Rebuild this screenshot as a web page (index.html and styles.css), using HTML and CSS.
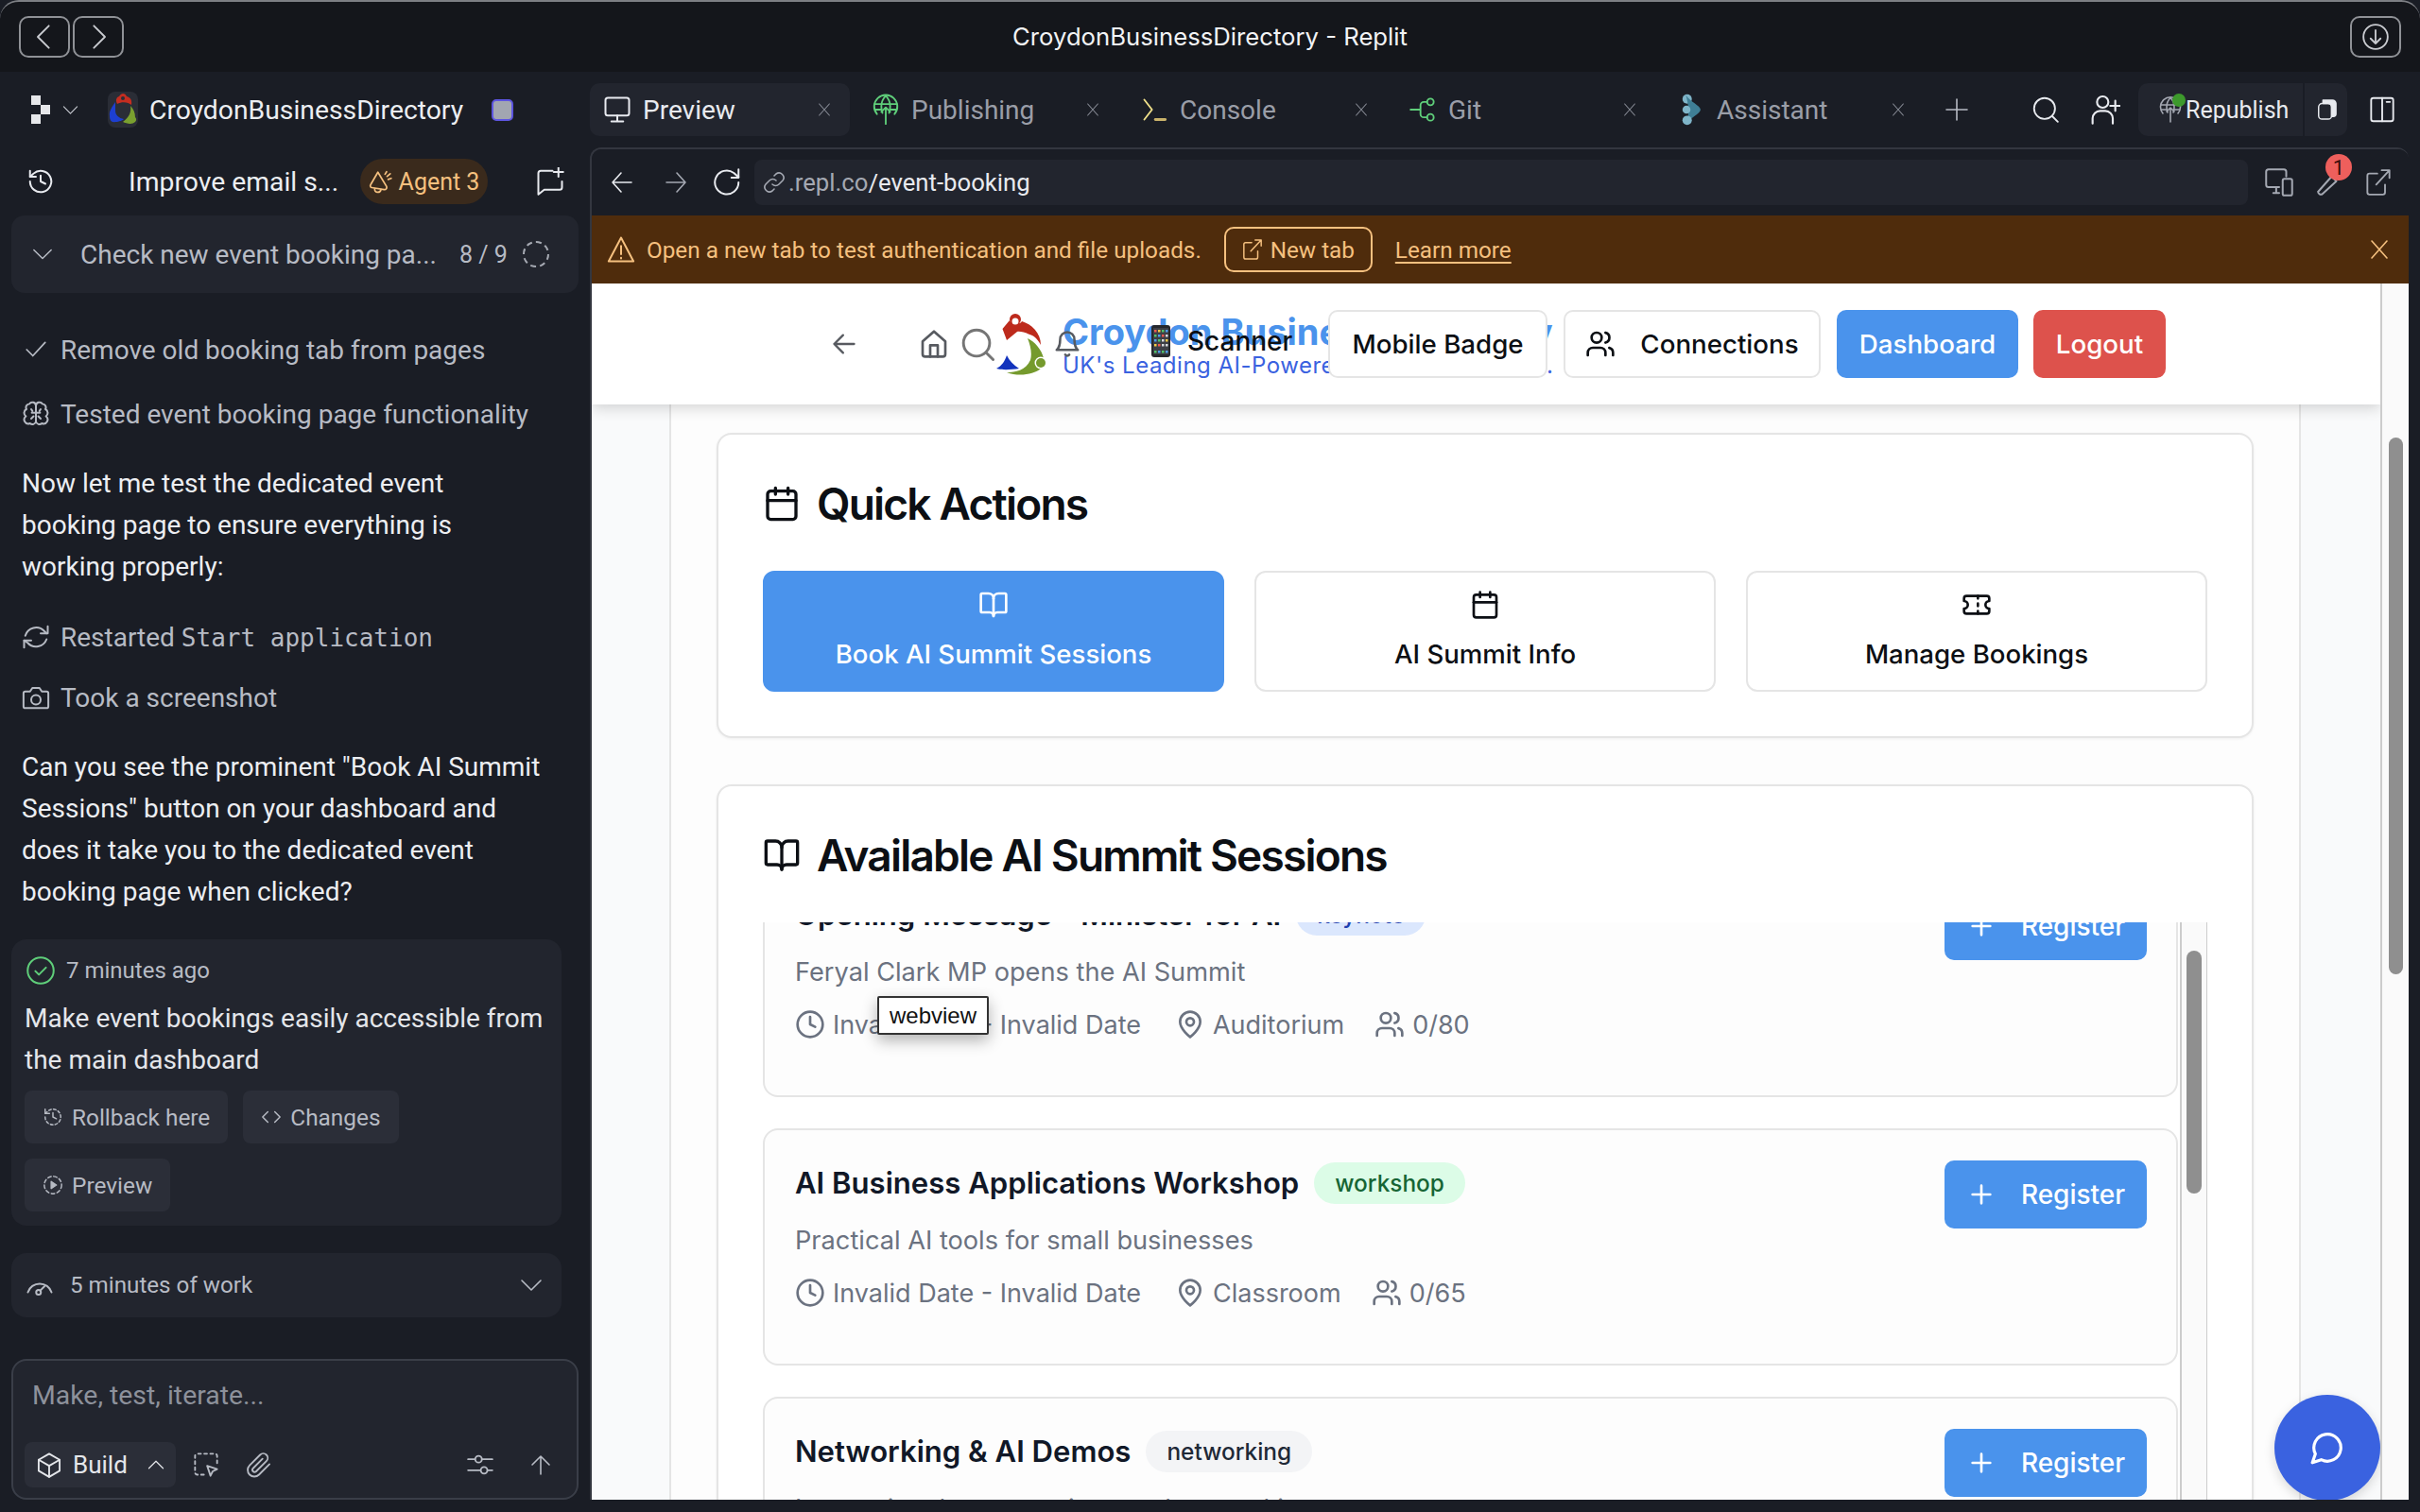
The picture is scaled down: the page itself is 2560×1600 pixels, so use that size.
FILE: index.html
```html
<!DOCTYPE html>
<html lang="en">
<head>
<meta charset="utf-8">
<title>CroydonBusinessDirectory - Replit</title>
<link rel="stylesheet" href="styles.css">
</head>
<body>
<svg class="sprite" xmlns="http://www.w3.org/2000/svg">
  <symbol id="chev-d" viewBox="0 0 24 24"><path d="M2 7l10 10 10-10"/></symbol>
  <symbol id="chev-u" viewBox="0 0 24 24"><path d="M2 17 12 7l10 10"/></symbol>
  <symbol id="history" viewBox="0 0 24 24"><path d="M3 12a9 9 0 1 0 3-6.7L3 8"/><path d="M3 3v5h5"/><path d="M12 7v5l4 2"/></symbol>
  <symbol id="check" viewBox="0 0 24 24"><path d="M21 5 9 18l-6-6"/></symbol>
  <symbol id="brain" viewBox="0 0 24 24"><path d="M12 5a3 3 0 0 0-5.500-1.500A3 3 0 0 0 4 8a3.500 3.500 0 0 0-.5 6A3.500 3.500 0 0 0 7 20a3 3 0 0 0 5-1.500z"/><path d="M12 5a3 3 0 0 1 5.500-1.500A3 3 0 0 1 20 8a3.500 3.500 0 0 1 .5 6 3.500 3.500 0 0 1-3.500 6 3 3 0 0 1-5-1.500z"/><path d="M12 11H8.500M12 11h3.500M8 8l1 1.500M16 8l-1 1.500M8 16l2-2M16 16l-2-2"/></symbol>
  <symbol id="refresh" viewBox="0 0 24 24"><path d="M3 11a9.500 9.500 0 0 1 16-4l2 2"/><path d="M22 3v6h-6"/><path d="M21 14a9.500 9.500 0 0 1-16 3l-3-2"/><path d="M2 21v-6h6"/></symbol>
  <symbol id="camera" viewBox="0 0 24 24"><path d="M15 4H9L7 7H3a1.500 1.500 0 0 0-1.500 1.500v11A1.500 1.500 0 0 0 3 21h18a1.500 1.500 0 0 0 1.500-1.500v-11A1.500 1.500 0 0 0 21 7h-4z"/><circle cx="12" cy="14" r="4"/></symbol>
  <symbol id="check-circle" viewBox="0 0 24 24"><circle cx="12" cy="12" r="11"/><path d="M7.500 12.500l3 3 6-6"/></symbol>
  <symbol id="rollback" viewBox="0 0 24 24"><path stroke-dasharray="3 2.500" d="M3 12a9 9 0 1 0 3-6.700L3 8"/><path d="M3 3v5h5"/><path d="M12 7v5l4 2"/></symbol>
  <symbol id="code" viewBox="0 0 24 24"><path d="M8 6l-6 6 6 6"/><path d="M16 6l6 6-6 6"/></symbol>
  <symbol id="play-dash" viewBox="0 0 24 24"><circle cx="12" cy="12" r="10" stroke-dasharray="4 2.800"/><path class="solid" d="M10 8l6 4-6 4z"/></symbol>
  <symbol id="gauge" viewBox="0 0 24 24"><path d="M2 18a10.500 10.500 0 0 1 20 0"/><circle cx="11" cy="18" r="2"/><path d="M12.500 16.500l3.500-3.500"/></symbol>
  <symbol id="cube" viewBox="0 0 24 24"><path d="M12 2l9.500 5.500v10L12 23l-9.500-5.500v-10z"/><path d="M2.500 7.500 12 13l9.500-5.500"/><path d="M12 13v10"/></symbol>
  <symbol id="select" viewBox="0 0 24 24"><path stroke-dasharray="2.500 3" d="M10 21H4a2 2 0 0 1-2-2V4a2 2 0 0 1 2-2h16a2 2 0 0 1 2 2v7"/><path d="M13 13l9 3-4 2-2 4z"/></symbol>
  <symbol id="clip" viewBox="0 0 24 24"><path d="M21.500 11.500 12 21a6 6 0 0 1-8.500-8.500l9.500-9.500a4 4 0 0 1 5.700 5.700l-9.500 9.500a2 2 0 0 1-2.800-2.800l8.800-8.800"/></symbol>
  <symbol id="sliders" viewBox="0 0 24 24"><path d="M1 7h6M14 7h9M1 17h11M19 17h4"/><circle cx="10.500" cy="7" r="3"/><circle cx="15.500" cy="17" r="3"/></symbol>
  <symbol id="up" viewBox="0 0 24 24"><path d="M12 22V3M3 12l9-9 9 9"/></symbol>
  <symbol id="down-circle" viewBox="0 0 24 24"><circle cx="12" cy="12" r="11"/><path d="M12 6v12M7.500 13.500 12 18l4.500-4.500"/></symbol>
  <symbol id="left" viewBox="0 0 24 24"><path d="M16 2 6 12l10 10"/></symbol>
  <symbol id="right" viewBox="0 0 24 24"><path d="M8 2l10 10L8 22"/></symbol>
  <symbol id="monitor" viewBox="0 0 24 24"><rect x="2" y="2" width="20" height="15" rx="2"/><path d="M12 17v5M7 22h10"/></symbol>
  <symbol id="globe-up" viewBox="0 0 24 28"><path d="M4 18a10.500 10.500 0 1 1 16 0"/><path d="M12 1.500c-3 3-4 6-4 9.500s.5 4 1 6M12 1.500c3 3 4 6 4 9.500s-.5 4-1 6M2 9h20M2.500 14h6M15.500 14h6"/><path d="M12 27V12M8 16l4-4 4 4"/></symbol>
  <symbol id="prompt" viewBox="0 0 24 24"><path class="stroke-yellow" d="M3 3l7 9-7 9"/><path class="stroke-sand" d="M13 21h9"/></symbol>
  <symbol id="git" viewBox="0 0 24 24"><circle cx="19" cy="5" r="3"/><circle cx="19" cy="19" r="3"/><path d="M16 5h-3a3 3 0 0 0-3 3v8a3 3 0 0 0 3 3h3M1 12h9"/></symbol>
  <symbol id="close" viewBox="0 0 24 24"><path d="M4 3l16 18M20 3 4 21"/></symbol>
  <symbol id="plus" viewBox="0 0 24 24"><path d="M12 1v22M1 12h22"/></symbol>
  <symbol id="search" viewBox="0 0 24 24"><circle cx="11" cy="11" r="9.500"/><path d="M18 18l5 5"/></symbol>
  <symbol id="user-plus" viewBox="0 0 24 24"><circle cx="10" cy="6" r="4.500"/><path d="M2 23v-4a6 6 0 0 1 6-6h4a6 6 0 0 1 6 6v4"/><path d="M20 5v8M16 9h8"/></symbol>
  <symbol id="stack" viewBox="0 0 24 24"><rect x="3" y="5" width="15" height="18" rx="4"/><path class="solid" d="M8 1h11a4 4 0 0 1 4 4v12a3 3 0 0 1-3 3h-2V9a4 4 0 0 0-4-4H8z"/></symbol>
  <symbol id="panel" viewBox="0 0 24 24"><rect x="2" y="1.500" width="20" height="21" rx="2"/><path d="M12 1.500v21M16 5h3"/></symbol>
  <symbol id="arrow-l" viewBox="0 0 24 24"><path d="M22 12H2M11 2 2 12l9 10"/></symbol>
  <symbol id="arrow-r" viewBox="0 0 24 24"><path d="M2 12h20M13 2l9 10-9 10"/></symbol>
  <symbol id="reload" viewBox="0 0 24 24"><path d="M21 12a10 10 0 1 1-4-8l4 3.500"/><path d="M21 1v7h-6"/></symbol>
  <symbol id="link" viewBox="0 0 24 24"><path d="M10 14a5 5 0 0 0 7 0l4-4a5 5 0 0 0-7-7l-2 2"/><path d="M14 10a5 5 0 0 0-7 0l-4 4a5 5 0 0 0 7 7l2-2"/></symbol>
  <symbol id="devices" viewBox="0 0 24 24"><path d="M12 16H3a2 2 0 0 1-2-2V3a2 2 0 0 1 2-2h13a2 2 0 0 1 2 2v4"/><path d="M7 21h5M9.500 16v5"/><rect x="15" y="9" width="8" height="14" rx="1.500"/></symbol>
  <symbol id="wrench" viewBox="0 0 24 24"><path d="M2.500 20 14 7l4 4L6 22a2.500 2.500 0 0 1-3.500-2z"/></symbol>
  <symbol id="external" viewBox="0 0 24 24"><path d="M11 4H4a2 2 0 0 0-2 2v15a2 2 0 0 0 2 2h12a2 2 0 0 0 2-2v-7"/><path d="M10 14 22 1M15 1h7v7"/></symbol>
  <symbol id="warning" viewBox="0 0 24 24"><path d="M12 2 1.500 22h21z"/><path d="M12 9v7M12 19v.5"/></symbol>
  <symbol id="lu-arrow" viewBox="0 0 24 24"><path d="M21 12H3M11 4l-8 8 8 8"/></symbol>
  <symbol id="lu-home" viewBox="0 0 24 24"><path d="M3 10l9-8 9 8v10a2 2 0 0 1-2 2H5a2 2 0 0 1-2-2z"/><path d="M9 22v-9h6v9"/></symbol>
  <symbol id="lu-bell" viewBox="0 0 24 24"><path d="M6 8a6 6 0 0 1 12 0c0 7 3 9 3 9H3s3-2 3-9"/><path d="M10.300 21a2 2 0 0 0 3.400 0"/></symbol>
  <symbol id="lu-users" viewBox="0 0 24 24"><path d="M16 21v-2a4 4 0 0 0-4-4H6a4 4 0 0 0-4 4v2"/><circle cx="9" cy="7" r="4"/><path d="M22 21v-2a4 4 0 0 0-3-3.900M16 3.100a4 4 0 0 1 0 7.800"/></symbol>
  <symbol id="lu-calendar" viewBox="0 0 24 24"><path d="M8 2v4M16 2v4"/><rect x="3" y="4" width="18" height="18" rx="2"/><path d="M3 10h18"/></symbol>
  <symbol id="lu-book" viewBox="0 0 24 24"><path d="M12 7v14"/><path d="M3 18a1 1 0 0 1-1-1V4a1 1 0 0 1 1-1h5a4 4 0 0 1 4 4 4 4 0 0 1 4-4h5a1 1 0 0 1 1 1v13a1 1 0 0 1-1 1h-6a3 3 0 0 0-3 3 3 3 0 0 0-3-3z"/></symbol>
  <symbol id="lu-ticket" viewBox="0 0 24 24"><path d="M2 9a3 3 0 0 1 0 6v2a2 2 0 0 0 2 2h16a2 2 0 0 0 2-2v-2a3 3 0 0 1 0-6V7a2 2 0 0 0-2-2H4a2 2 0 0 0-2 2z"/><path d="M13 5v2M13 17v2M13 11v2"/></symbol>
  <symbol id="lu-clock" viewBox="0 0 24 24"><circle cx="12" cy="12" r="10"/><path d="M12 6v6l4 2"/></symbol>
  <symbol id="lu-pin" viewBox="0 0 24 24"><path d="M20 10c0 6-8 12-8 12s-8-6-8-12a8 8 0 0 1 16 0"/><circle cx="12" cy="10" r="3"/></symbol>
  <symbol id="lu-plus" viewBox="0 0 24 24"><path d="M5 12h14M12 5v14"/></symbol>
  <symbol id="lu-chat" viewBox="0 0 24 24"><path d="M7.900 20A9 9 0 1 0 4 16.100L2 22z"/></symbol>
  <symbol id="logo" viewBox="0 0 57 65">
    <path fill="#bd2a1c" d="M11.500 16 19 7c1 4 11 5 13 1 10 3 20 12 20 25-4-7-7-10-13-11.500-4-2-9-3-12-2.500l-11 9z"/>
    <circle fill="#bd2a1c" cx="25" cy="6" r="6"/>
    <circle fill="#fff" cx="25" cy="8" r="3.500"/>
    <path fill="#759a2d" d="M38 26c7 3 15 12 17 21l-6 3c-1 4 0 6 3 8-7 6-23 9-36 4 9 0 20-2 25-13 2-7 0-16-3-23z"/>
    <circle fill="#fff" cx="52" cy="52" r="6.500"/>
    <circle fill="#759a2d" cx="52" cy="52" r="5"/>
    <path fill="#1233bd" d="M16 44c3 6 7 10 13 14-7 1-17 2-24 0 6-3 9-8 11-14z"/>
  </symbol>
  <symbol id="logo-tile" viewBox="0 0 32 38">
    <path fill="#c42d20" d="M10 13c-2-4-1-7 2-8 1-2 3-3 4-3 2 0 3 1 4 3 4 1 6 4 5 9-3-3-10-4-15-1z"/>
    <circle fill="#2a2d36" cx="16" cy="7" r="2"/>
    <path fill="#1d3fd0" d="M8 11c-3 5-7 9-6 15 0 4 2 7 6 6 4 0 8-2 9-3-5-1-9-4-9-9z"/>
    <path fill="#7aa02f" d="M24 15c1 6-1 12-8 17 4 2 10 3 13 0 2-2 1-4 0-5 0-5-2-9-5-12z"/>
  </symbol>
  <symbol id="dots" viewBox="0 0 20 30"><path d="M0 0h10v10H0zM10 10h10v10H10zM0 20h10v10H0z"/></symbol>
  <symbol id="bell-horn" viewBox="0 0 24 24"><path d="M9 3 2 15c-1 1.500 0 3 1 3l12 2c2 .3 3-1.500 2.500-3z"/><path d="M6 19c-1 4 5 5 6 1"/><path d="M16 5l1.500-2.500M19 10l3-1M18 7l3-2.500"/></symbol>
  <symbol id="chat-plus" viewBox="0 0 24 24"><path d="M14 3H4a2 2 0 0 0-2 2v18l5-4h13a2 2 0 0 0 2-2v-5"/><path d="M19 0v8M15 4h8"/></symbol>
  <symbol id="agent-mark" viewBox="0 0 14 24"><circle class="fill-light" cx="4" cy="4" r="3.500"/><path class="fill-teal" d="M3 1c3 5 11 8 11 11s-8 6-11 11c3-6 2-16 0-22z"/><circle class="fill-light" cx="3.500" cy="12" r="3"/><circle class="fill-light" cx="4" cy="20" r="3.500"/></symbol>
  <symbol id="phone-emoji" viewBox="0 0 20 34">
    <rect width="20" height="34" rx="3" fill="#26282d"/>
    <rect x="2" y="3" width="16" height="28" fill="#3d3f46"/>
    <path fill="#ee5a52" d="M3 5h2.500v2.500H3zM11 10h2.500v2.500H11zM7 20h2.500v2.500H7z"/>
    <path fill="#f6c945" d="M7 5h2.500v2.500H7zM15 15h2.500v2.500H15zM3 20h2.500v2.500H3z"/>
    <path fill="#52c46a" d="M11 5h2.500v2.500H11zM3 10h2.500v2.500H3zM7 15h2.500v2.500H7zM3 27h2.500v2.500H3zM11 27h2.500v2.500H11z"/>
    <path fill="#4d9cec" d="M15 5h2.500v2.500H15zM7 10h2.500v2.500H7zM3 15h2.500v2.500H3zM7 27h2.500v2.500H7zM15 27h2.500v2.500H15z"/>
    <path fill="#d7d9de" d="M15 10h2.500v2.500H15zM11 15h2.500v2.500H11zM11 20h2.500v2.500H11zM15 20h2.500v2.500H15z"/>
  </symbol>
</svg>

<div class="window">
  <header class="titlebar">
    <div class="nav-pair">
      <span class="tb-btn"><svg class="i" width="28" height="28"><use href="#left"/></svg></span>
      <span class="tb-btn"><svg class="i" width="28" height="28"><use href="#right"/></svg></span>
    </div>
    <span class="tb-title">CroydonBusinessDirectory - Replit</span>
    <span class="tb-btn"><svg class="i" width="28" height="28"><use href="#down-circle"/></svg></span>
  </header>

  <div class="ide">
    <aside class="sidebar">
      <div class="project-row">
        <svg class="dots-icon" width="20" height="30"><use href="#dots"/></svg>
        <svg class="i chev-sm" width="17" height="17"><use href="#chev-d"/></svg>
        <span class="proj-logo"><svg width="32" height="38"><use href="#logo-tile"/></svg></span>
        <span class="proj-name">CroydonBusinessDirectory</span>
        <span class="proj-square"></span>
      </div>
      <div class="agent-row">
        <svg class="i" width="30" height="30"><use href="#history"/></svg>
        <span class="agent-title">Improve email s...</span>
        <span class="agent-badge"><svg class="i" width="26" height="26"><use href="#bell-horn"/></svg>Agent 3</span>
        <svg class="i agent-new" width="30" height="30"><use href="#chat-plus"/></svg>
      </div>
      <div class="task-card">
        <svg class="i" width="22" height="22"><use href="#chev-d"/></svg>
        <span class="task-text">Check new event booking pa...</span>
        <span class="task-count">8 / 9</span>
        <span class="task-ring"></span>
      </div>

      <div class="feed">
        <div class="act act-first"><span class="act-ico"><svg class="i" width="26" height="26"><use href="#check"/></svg></span>Remove old booking tab from pages</div>
        <div class="act act-brain"><span class="act-ico"><svg class="i" width="30" height="30"><use href="#brain"/></svg></span>Tested event booking page functionality</div>
        <p class="msg msg-a">Now let me test the dedicated event booking page to ensure everything is working properly:</p>
        <div class="act act-restart"><span class="act-ico"><svg class="i" width="32" height="30"><use href="#refresh"/></svg></span><span>Restarted <code class="mono">Start application</code></span></div>
        <div class="act act-shot"><span class="act-ico"><svg class="i" width="32" height="30"><use href="#camera"/></svg></span>Took a screenshot</div>
        <p class="msg msg-b">Can you see the prominent "Book AI Summit Sessions" button on your dashboard and does it take you to the dedicated event booking page when clicked?</p>

        <section class="check-card">
          <div class="ago"><svg class="i green" width="30" height="30"><use href="#check-circle"/></svg>7 minutes ago</div>
          <p class="check-msg">Make event bookings easily accessible from the main dashboard</p>
          <div class="chip-row">
            <span class="chip"><svg class="i" width="22" height="22"><use href="#rollback"/></svg>Rollback here</span>
            <span class="chip"><svg class="i" width="22" height="22"><use href="#code"/></svg>Changes</span>
            <span class="chip"><svg class="i" width="22" height="22"><use href="#play-dash"/></svg>Preview</span>
          </div>
        </section>

        <div class="work-card">
          <svg class="i" width="30" height="30"><use href="#gauge"/></svg>
          <span class="work-text">5 minutes of work</span>
          <svg class="i work-chev" width="24" height="24"><use href="#chev-d"/></svg>
        </div>
      </div>

      <div class="composer">
        <div class="placeholder">Make, test, iterate...</div>
        <div class="composer-tools">
          <span class="build"><svg class="i" width="28" height="30"><use href="#cube"/></svg><span class="build-label">Build</span><svg class="i" width="18" height="18"><use href="#chev-u"/></svg></span>
          <svg class="i tool-sel" width="28" height="28"><use href="#select"/></svg>
          <svg class="i tool-clip" width="28" height="28"><use href="#clip"/></svg>
          <svg class="i tool-sliders" width="28" height="28"><use href="#sliders"/></svg>
          <svg class="i tool-up" width="24" height="24"><use href="#up"/></svg>
        </div>
      </div>
    </aside>

    <main class="workspace">
      <nav class="tabs">
        <div class="tab tab-active"><span class="tab-ico"><svg class="i" width="30" height="30"><use href="#monitor"/></svg></span><span class="tab-label">Preview</span><svg class="i tab-x" width="16" height="16"><use href="#close"/></svg></div>
        <div class="tab"><span class="tab-ico"><svg class="i green" width="28" height="34"><use href="#globe-up"/></svg></span><span class="tab-label">Publishing</span><svg class="i tab-x" width="16" height="16"><use href="#close"/></svg></div>
        <div class="tab"><span class="tab-ico"><svg class="i" width="28" height="28"><use href="#prompt"/></svg></span><span class="tab-label">Console</span><svg class="i tab-x" width="16" height="16"><use href="#close"/></svg></div>
        <div class="tab"><span class="tab-ico"><svg class="i green" width="28" height="28"><use href="#git"/></svg></span><span class="tab-label">Git</span><svg class="i tab-x" width="16" height="16"><use href="#close"/></svg></div>
        <div class="tab"><span class="tab-ico"><svg width="22" height="34"><use href="#agent-mark"/></svg></span><span class="tab-label">Assistant</span><svg class="i tab-x" width="16" height="16"><use href="#close"/></svg></div>
        <svg class="i tabs-plus" width="24" height="24"><use href="#plus"/></svg>
        <svg class="i tabs-search" width="28" height="28"><use href="#search"/></svg>
        <svg class="i tabs-user" width="32" height="32"><use href="#user-plus"/></svg>
        <div class="republish">
          <span class="rep-main"><span class="rep-ico"><svg class="i" width="24" height="30"><use href="#globe-up"/></svg><span class="rep-dot"></span></span>Republish</span>
          <span class="rep-side"><svg class="i" width="22" height="24"><use href="#stack"/></svg></span>
        </div>
        <svg class="i tabs-panel" width="28" height="28"><use href="#panel"/></svg>
      </nav>

      <section class="frame">
        <div class="browser">
          <svg class="i" width="24" height="24"><use href="#arrow-l"/></svg>
          <svg class="i dim br-fwd" width="24" height="24"><use href="#arrow-r"/></svg>
          <svg class="i br-reload" width="30" height="30"><use href="#reload"/></svg>
          <div class="urlbar"><svg class="i dim" width="24" height="24"><use href="#link"/></svg><span class="url-host">.repl.co</span><span class="url-path">/event-booking</span></div>
          <svg class="i dim br-dev" width="30" height="30"><use href="#devices"/></svg>
          <span class="br-wrench"><svg class="i dim" width="30" height="30"><use href="#wrench"/></svg><span class="br-badge">1</span></span>
          <svg class="i dim br-ext" width="28" height="28"><use href="#external"/></svg>
        </div>
        <div class="banner">
          <svg class="i" width="30" height="30"><use href="#warning"/></svg>
          <span class="banner-text">Open a new tab to test authentication and file uploads.</span>
          <span class="banner-btn"><svg class="i" width="22" height="22"><use href="#external"/></svg>New tab</span>
          <a class="banner-link">Learn more</a>
          <svg class="i banner-x" width="24" height="24"><use href="#close"/></svg>
        </div>

        <div class="viewport">
          <div class="site">
            <header class="site-head">
              <svg class="lu head-back" width="28" height="28"><use href="#lu-arrow"/></svg>
              <svg class="lu head-home" width="32" height="32"><use href="#lu-home"/></svg>
              <svg class="lu head-search" width="35" height="35"><use href="#search"/></svg>
              <svg class="head-logo" width="57" height="65"><use href="#logo"/></svg>
              <svg class="lu head-bell" width="30" height="30"><use href="#lu-bell"/></svg>
              <div class="brand">
                <div class="brand-name">Croydon Business Directory</div>
                <div class="brand-sub">UK's Leading AI-Powered Business Hub Co.</div>
              </div>
              <div class="scanner"><svg width="20" height="34"><use href="#phone-emoji"/></svg><span>Scanner</span></div>
              <div class="head-actions">
                <span class="hbtn hbtn-plain hbtn-badge">Mobile Badge</span>
                <span class="hbtn hbtn-plain hbtn-conn"><svg class="lu" width="32" height="32"><use href="#lu-users"/></svg>Connections</span>
                <span class="hbtn hbtn-blue hbtn-dash">Dashboard</span>
                <span class="hbtn hbtn-red hbtn-out">Logout</span>
              </div>
            </header>

            <div class="container">
              <section class="panel">
                <h2 class="panel-title"><svg class="lu" width="40" height="40"><use href="#lu-calendar"/></svg>Quick Actions</h2>
                <div class="qa-grid">
                  <span class="qa qa-primary"><svg class="lu" width="32" height="32"><use href="#lu-book"/></svg>Book AI Summit Sessions</span>
                  <span class="qa"><svg class="lu" width="32" height="32"><use href="#lu-calendar"/></svg>AI Summit Info</span>
                  <span class="qa"><svg class="lu" width="32" height="32"><use href="#lu-ticket"/></svg>Manage Bookings</span>
                </div>
              </section>

              <section class="panel panel-list">
                <h2 class="panel-title"><svg class="lu" width="40" height="40"><use href="#lu-book"/></svg>Available AI Summit Sessions</h2>
                <div class="list-view">
                  <div class="list-inner">
                    <article class="session">
                      <div class="sess-body">
                        <div class="sess-head"><h3 class="sess-title">Opening Message - Minister for AI</h3><span class="tag tag-keynote">keynote</span></div>
                        <p class="sess-desc">Feryal Clark MP opens the AI Summit</p>
                        <div class="sess-meta">
                          <span class="meta"><svg class="lu" width="32" height="32"><use href="#lu-clock"/></svg>Invalid Date - Invalid Date</span>
                          <span class="meta"><svg class="lu" width="32" height="32"><use href="#lu-pin"/></svg>Auditorium</span>
                          <span class="meta"><svg class="lu" width="32" height="32"><use href="#lu-users"/></svg>0/80</span>
                        </div>
                      </div>
                      <span class="reg"><svg class="lu" width="32" height="32"><use href="#lu-plus"/></svg>Register</span>
                    </article>
                    <article class="session">
                      <div class="sess-body">
                        <div class="sess-head"><h3 class="sess-title">AI Business Applications Workshop</h3><span class="tag tag-workshop">workshop</span></div>
                        <p class="sess-desc">Practical AI tools for small businesses</p>
                        <div class="sess-meta">
                          <span class="meta"><svg class="lu" width="32" height="32"><use href="#lu-clock"/></svg>Invalid Date - Invalid Date</span>
                          <span class="meta"><svg class="lu" width="32" height="32"><use href="#lu-pin"/></svg>Classroom</span>
                          <span class="meta"><svg class="lu" width="32" height="32"><use href="#lu-users"/></svg>0/65</span>
                        </div>
                      </div>
                      <span class="reg"><svg class="lu" width="32" height="32"><use href="#lu-plus"/></svg>Register</span>
                    </article>
                    <article class="session">
                      <div class="sess-body">
                        <div class="sess-head"><h3 class="sess-title">Networking &amp; AI Demos</h3><span class="tag tag-network">networking</span></div>
                        <p class="sess-desc">Interactive demonstrations and networking</p>
                      </div>
                      <span class="reg"><svg class="lu" width="32" height="32"><use href="#lu-plus"/></svg>Register</span>
                    </article>
                  </div>
                  <div class="list-track"><span class="list-thumb"></span></div>
                </div>
              </section>
            </div>
            <span class="tooltip">webview</span>
            <span class="chat-fab"><svg class="lu" width="38" height="38"><use href="#lu-chat"/></svg></span>
          </div>
          <div class="page-track"><span class="page-thumb"></span></div>
        </div>
      </section>
    </main>
  </div>
</div>
</body>
</html>
```

FILE: styles.css
```css
* { box-sizing: border-box; }
html, body { margin: 0; padding: 0; }
body {
  width: 2560px; height: 1600px; overflow: hidden;
  background: #1a1d25; color: #e8eaef;
  font-family: Roboto, "Liberation Sans", sans-serif;
  font-size: 28px;
}
p, h2, h3 { margin: 0; }
.sprite { position: absolute; width: 0; height: 0; overflow: hidden; }
.i { fill: none; stroke: currentColor; stroke-width: 1.6; stroke-linecap: round; stroke-linejoin: round; flex: none; }
.lu { fill: none; stroke: currentColor; stroke-width: 2; stroke-linecap: round; stroke-linejoin: round; flex: none; }
.solid { fill: currentColor; }
.green { color: #5fce7a; }
.dim { color: #a4a8b2; }
.stroke-yellow { stroke: #f0e08a; }
.stroke-sand { stroke: #c9b26a; stroke-width: 2.4; }
.fill-light { fill: #7fb5c9; stroke: none; }
.fill-teal { fill: #3f7f96; stroke: none; }

.window { width: 2560px; height: 1600px; display: flex; flex-direction: column; }

.titlebar {
  height: 76px; flex: none; display: flex; align-items: center; justify-content: space-between;
  padding: 0 20px; background: #14161b; border-top: 2px solid #7d7f84; border-radius: 20px 20px 0 0;
  position: relative;
}
.nav-pair { display: flex; gap: 3px; }
.tb-btn {
  width: 54px; height: 44px; border: 2px solid #8f9196; border-radius: 10px;
  display: flex; align-items: center; justify-content: center; color: #c9cbd0;
}
.tb-title {
  position: absolute; left: 0; right: 0; top: 0; bottom: 2px; display: flex; align-items: center; justify-content: center;
  font-family: Inter, sans-serif; font-size: 25.700px; font-weight: 400; color: #f2f3f5;
}

.ide { flex: 1; display: flex; min-height: 0; }

.sidebar { width: 624px; flex: none; display: flex; flex-direction: column; }
.project-row { height: 80px; display: flex; align-items: center; padding-left: 33px; flex: none; }
.dots-icon { fill: #e6e7ea; }
.chev-sm { margin-left: 13px; color: #c6c9d0; }
.proj-logo {
  width: 32px; height: 38px; margin-left: 31px; border-radius: 8px; background: #2a2d36; display: flex; align-items: center; justify-content: center; overflow: hidden;
}
.proj-name { margin-left: 12px; color: #eceef2; font-size: 28.300px; }
.proj-square { width: 23px; height: 23px; margin-left: 30px; border: 2px solid #5d55e0; border-radius: 5px; background: #a2a6b1; }

.agent-row { height: 48px; margin-top: 12px; flex: none; display: flex; align-items: center; padding-left: 28px; }
.agent-title { margin-left: 78px; width: 245px; color: #eceef2; font-size: 28.300px; white-space: nowrap; }
.agent-badge {
  width: 135px; height: 48px; border-radius: 24px; background: #3a2a1c; color: #f5c07f; font-size: 25px;
  display: flex; align-items: center; justify-content: center; gap: 6px;
}
.agent-new { margin-left: 51px; }

.task-card {
  height: 82px; margin: 12px 12px 0; flex: none; width: 600px; border-radius: 14px; background: #22252e;
  display: flex; align-items: center; padding-left: 22px; color: #b7bbc4;
}
.task-text { margin-left: 29px; width: 401px; white-space: nowrap; }
.task-count { font-size: 25px; width: 67px; }
.task-ring { width: 28px; height: 28px; border: 2px dashed #a6aab3; border-radius: 50%; }

.feed { flex: none; padding: 38px 0 0 12px; width: 612px; display: flex; flex-direction: column; }
.act { height: 44px; display: flex; align-items: center; color: #b7bbc4; padding-left: 10px; font-size: 28px; white-space: nowrap; }
.act-ico { width: 32px; margin-right: 10px; display: flex; justify-content: center; flex: none; }
.act-brain { margin-top: 24px; }
.act-restart { margin-top: 30px; }
.act-shot { margin-top: 20px; }
.mono { font-family: "DejaVu Sans Mono", monospace; font-size: 26px; }
.msg { color: #eceef2; line-height: 44px; padding-left: 11px; font-size: 28px; }
.msg-a { margin-top: 30px; width: 530px; }
.msg-b { margin-top: 30px; width: 570px; }

.check-card { width: 582px; height: 303px; margin-top: 28px; border-radius: 16px; background: #22252e; padding: 11px 14px 0; }
.ago { height: 44px; display: flex; align-items: center; gap: 12px; color: #b7bbc4; font-size: 24px; padding-left: 2px; }
.check-msg { margin-top: 7px; line-height: 44px; color: #e4e6ea; font-size: 28px; }
.chip-row { margin-top: 10px; display: flex; flex-wrap: wrap; gap: 16px; }
.chip {
  height: 56px; border-radius: 8px; background: #2b2e38; color: #b7bbc4; font-size: 24.400px;
  display: flex; align-items: center; gap: 9px; padding: 0 19px;
}
.work-card {
  width: 582px; height: 68px; margin-top: 29px; border-radius: 16px; background: #22252e;
  display: flex; align-items: center; padding-left: 15px; color: #b7bbc4; font-size: 24.200px;
}
.work-text { margin-left: 17px; }
.work-chev { margin-left: auto; margin-right: 20px; }

.composer {
  width: 600px; height: 149px; margin: 44px 0 0 12px; flex: none; background: #22252e; border: 2px solid #3a3e48; border-radius: 16px;
  padding: 15px 12px 0;
}
.placeholder { height: 44px; padding-left: 8px; line-height: 44px; color: #8d919b; font-size: 28.400px; }
.composer-tools { margin-top: 27px; display: flex; align-items: center; color: #b7bbc4; }
.build {
  width: 160px; height: 48px; border-radius: 8px; background: #2b2e38; display: flex; align-items: center; padding-left: 12px; color: #e4e6ea; font-size: 26px;
}
.build-label { margin-left: 11px; width: 79px; }
.tool-sel { margin-left: 18px; }
.tool-clip { margin-left: 28px; }
.tool-sliders { margin-left: auto; margin-right: 38px; }
.tool-up { margin-right: 14px; }

.workspace { flex: 1; min-width: 0; display: flex; flex-direction: column; }
.tabs { height: 80px; flex: none; display: flex; align-items: flex-start; padding-top: 12px; gap: 9px; position: relative; }
.tab {
  width: 275px; height: 56px; border-radius: 10px; display: flex; align-items: center; padding-left: 14px; color: #9a9ea8; flex: none;
}
.tab-active { background: #22252e; color: #e8eaef; }
.tab-ico { width: 30px; margin-right: 12px; display: flex; justify-content: center; }
.tab-label { flex: 1; font-size: 28px; }
.tab-x { margin-right: 19px; color: #8a8e98; }
.tabs-plus { margin: 16px 0 0 14px; color: #b7bbc4; }
.tabs-search { margin: 14px 0 0 59px; }
.tabs-user { margin: 12px 0 0 24px; }
.republish { width: 221px; height: 56px; margin-left: 10px; display: flex; border-radius: 10px; background: #22252e; flex: none; }
.rep-main { width: 176px; display: flex; align-items: center; padding-left: 22px; gap: 4px; font-size: 25px; border-right: 2px solid #1a1d25; white-space: nowrap; }
.rep-ico { position: relative; display: flex; color: #a4a8b2; }
.rep-dot { position: absolute; right: -4px; top: -2px; width: 14px; height: 14px; border-radius: 50%; background: #3d9a2c; }
.rep-side { flex: 1; display: flex; align-items: center; justify-content: center; }
.tabs-panel { margin: 14px 0 0 14px; }

.frame { width: 1924px; height: 1431px; flex: none; display: flex; flex-direction: column; border: 2px solid #33363f; border-bottom: 0; border-right: 0; border-radius: 12px 12px 0 0; overflow: hidden; }
.browser { height: 70px; flex: none; display: flex; align-items: center; padding-left: 20px; background: #1a1d25; }
.br-fwd { margin-left: 33px; }
.br-reload { margin-left: 28px; }
.urlbar {
  width: 1580px; height: 48px; margin-left: 13px; border-radius: 8px; background: #22252e; display: flex; align-items: center; padding-left: 9px; font-size: 25.700px;
}
.url-host { margin-left: 3px; color: #a4a8b2; }
.url-path { color: #e8eaef; }
.br-dev { margin-left: 18px; }
.br-wrench { margin-left: 23px; position: relative; display: flex; }
.br-badge {
  position: absolute; left: 11px; top: -15px; width: 28px; height: 28px; border-radius: 50%; background: #ee5f5c; color: #3c0d0c;
  font-size: 22px; display: flex; align-items: center; justify-content: center;
}
.br-ext { margin-left: 23px; }
.banner { height: 72px; flex: none; background: #4f2c0c; color: #f5c07f; display: flex; align-items: center; padding-left: 16px; font-size: 24.300px; }
.banner-text { margin-left: 12px; white-space: nowrap; }
.banner-btn { margin-left: 24px; width: 157px; height: 48px; border: 2px solid #f5c07f; border-radius: 10px; display: flex; align-items: center; justify-content: center; gap: 8px; }
.banner-link { margin-left: 24px; text-decoration: underline; text-underline-offset: 4px; }
.banner-x { margin-left: auto; margin-right: 19px; }

.viewport { flex: 1; min-height: 0; display: flex; background: #f9fafb; }
.site { width: 1892px; height: 1287px; position: relative; overflow: hidden; font-family: Inter, sans-serif; color: #0c0f14; flex: none; }
.site-head {
  height: 128px; position: relative; z-index: 3; background: #fff; box-shadow: 0 4px 14px rgba(0,0,0,.16);
  display: flex; align-items: center; padding-left: 253px; color: #575a60;
}
.head-home { margin-left: 65px; }
.head-search { margin-left: 13px; color: #757575; }
.head-logo { margin-left: -3px; position: relative; z-index: 1; }
.head-bell { margin-left: 8px; position: relative; z-index: 3; }
.brand { position: absolute; left: 498px; top: 30px; white-space: nowrap; z-index: 0; }
.brand-name { font-size: 38px; line-height: 42px; font-weight: 700; color: #4a93ec; }
.brand-sub { font-size: 24px; letter-spacing: .5px; line-height: 30px; color: #3a62e0; }
.scanner { position: absolute; left: 592px; top: 44px; display: flex; align-items: center; gap: 18px; font-size: 28px; font-weight: 500; color: #0c0f14; z-index: 2; }
.head-actions { margin-left: auto; padding-right: 227px; display: flex; gap: 17px; position: relative; z-index: 4; }
.hbtn { height: 72px; border-radius: 10px; display: flex; align-items: center; justify-content: center; font-size: 27.700px; font-weight: 500; }
.hbtn-plain { background: #fff; border: 2px solid #e5e5e5; color: #0c0f14; }
.hbtn-blue { background: #4a93ec; color: #fff; }
.hbtn-red { background: #dd524c; color: #fff; }
.hbtn-badge { width: 232px; }
.hbtn-conn { width: 272px; gap: 26px; }
.hbtn-dash { width: 192px; }
.hbtn-out { width: 140px; margin-left: -1px; }

.container { width: 1726px; margin-left: 82px; height: 1159px; background: #fdfdfd; border-left: 2px solid #e5e5e5; border-right: 2px solid #e5e5e5; padding: 30px 48px 0; overflow: hidden; }
.panel { background: #fff; border: 2px solid #e5e5e5; border-radius: 16px; padding: 47px; box-shadow: 0 1px 3px rgba(0,0,0,.06); }
.panel-list { margin-top: 49px; height: 800px; padding-bottom: 0; }
.panel-title { height: 52px; display: flex; align-items: center; gap: 17px; font-size: 46px; font-weight: 600; letter-spacing: -1.800px; line-height: 52px; }
.qa-grid { margin-top: 45px; display: grid; grid-template-columns: repeat(3, 488px); gap: 32px; }
.qa {
  height: 128px; border-radius: 12px; border: 2px solid #e5e5e5; background: #fff; display: flex; flex-direction: column; align-items: center; justify-content: flex-start;
  gap: 19px; padding-top: 18px; font-size: 27.600px; font-weight: 500;
}
.qa-primary { background: #4a93ec; border-color: #4a93ec; color: #fff; }

.list-view { margin-top: 45px; height: 611px; width: 1528px; display: flex; overflow: hidden; }
.list-inner { width: 1497px; margin-top: -66px; flex: none; display: flex; flex-direction: column; gap: 33px; }
.session { height: 251px; flex: none; border: 2px solid #e5e5e5; border-radius: 16px; background: #fdfdfd; padding: 32px 31px 32px 32px; display: flex; justify-content: space-between; }
.sess-head { height: 48px; display: flex; align-items: center; gap: 16px; }
.sess-title { font-size: 31.100px; font-weight: 600; color: #111827; white-space: nowrap; }
.tag { height: 44px; border-radius: 22px; padding: 0 22px; display: flex; align-items: center; font-size: 24.400px; font-weight: 500; }
.tag-keynote { background: #dbe7fd; color: #1e40af; }
.tag-workshop { background: #dcfce7; color: #166534; }
.tag-network { background: #f3f4f6; color: #1f2937; }
.sess-desc { margin-top: 15px; line-height: 44px; font-size: 27.200px; color: #6b7280; }
.sess-meta { margin-top: 11px; height: 44px; display: flex; align-items: center; gap: 36px; color: #6b7280; font-size: 27px; }
.meta { display: flex; align-items: center; gap: 8px; }
.meta:last-child { margin-left: -4px; }
.reg { width: 214px; height: 72px; flex: none; border-radius: 10px; background: #4a93ec; color: #fff; display: flex; align-items: center; justify-content: center; gap: 26px; font-size: 28px; font-weight: 500; }

.list-track { margin-left: 2px; width: 30px; height: 611px; flex: none; background: #fafafa; border-left: 2px solid #ccc; border-right: 2px solid #ccc; padding: 30px 5px 0; }
.list-thumb { display: block; height: 257px; border-radius: 8px; background: #8f8f8f; }

.tooltip {
  position: absolute; left: 302px; top: 754px; z-index: 5; width: 118px; height: 41px; background: #fff; border: 2px solid #333; border-radius: 2px;
  box-shadow: 0 6px 16px rgba(0,0,0,.3); font-family: "Liberation Sans", sans-serif; font-size: 24px; color: #111; display: flex; align-items: center; justify-content: center;
}
.chat-fab {
  position: absolute; left: 1780px; top: 1176px; z-index: 5; width: 112px; height: 112px; border-radius: 50%; background: #3a62e0; color: #fff;
  display: flex; align-items: center; justify-content: center; box-shadow: 0 4px 12px rgba(0,0,0,.15);
}
.page-track { flex: 1; background: #fafafa; border-left: 2px solid #ccc; padding: 163px 6px 0 7px; }
.page-thumb { display: block; height: 568px; border-radius: 8px; background: #8f8f8f; }
```
